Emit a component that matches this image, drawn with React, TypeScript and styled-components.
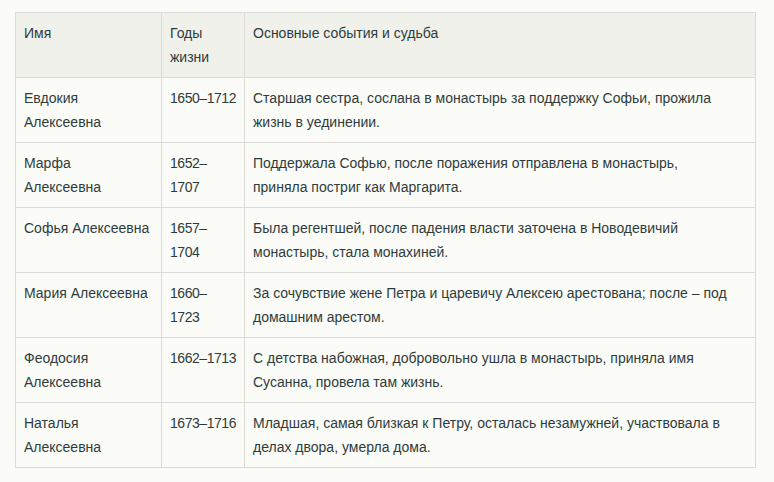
import React from "react";
import styled, { createGlobalStyle } from "styled-components";

const Global = createGlobalStyle`
  html, body { margin: 0; padding: 0; background: #fbfbf8; }
  body { font-family: "Liberation Sans", Arial, sans-serif; }
`;

const Page = styled.div`
  padding: 12px 19px 0 15px;
`;

const Table = styled.table`
  width: 740px;
  border-collapse: collapse;
  table-layout: fixed;
  font-size: 14px;
  line-height: 24px;
  color: #2e3b3c;
  border: 1px solid #dcdcd5;
`;

const Col = styled.col<{ $w: number }>`
  width: ${(p) => p.$w}px;
`;

const HeadRow = styled.tr`
  background: #f1f1ec;
`;

const Row = styled.tr`
  background: #fbfbf8;
`;

const Th = styled.th`
  text-align: left;
  font-weight: normal;
  vertical-align: top;
  padding: 8px;
  border: 1px solid #dcdcd5;
  height: 48px;
`;

const Td = styled.td<{ $tight?: boolean }>`
  vertical-align: top;
  padding: 8px;
  border: 1px solid #dcdcd5;
  height: 48px;
  white-space: ${(p) => (p.$tight ? "pre" : "pre-line")};
  letter-spacing: ${(p) => (p.$tight ? "-0.45px" : "normal")};
`;

const rows = [
  ["Евдокия\nАлексеевна", "1650–1712", "Старшая сестра, сослана в монастырь за поддержку Софьи, прожила жизнь в уединении."],
  ["Марфа\nАлексеевна", "1652–\n1707", "Поддержала Софью, после поражения отправлена в монастырь,\nприняла постриг как Маргарита."],
  ["Софья Алексеевна", "1657–\n1704", "Была регентшей, после падения власти заточена в Новодевичий монастырь, стала монахиней."],
  ["Мария Алексеевна", "1660–\n1723", "За сочувствие жене Петра и царевичу Алексею арестована; после – под домашним арестом."],
  ["Феодосия\nАлексеевна", "1662–1713", "С детства набожная, добровольно ушла в монастырь, приняла имя Сусанна, провела там жизнь."],
  ["Наталья\nАлексеевна", "1673–1716", "Младшая, самая близкая к Петру, осталась незамужней, участвовала в делах двора, умерла дома."],
];

export default function App() {
  return (
    <>
      <Global />
      <Page>
        <Table>
          <colgroup>
            <Col $w={146} />
            <Col $w={83} />
            <Col $w={511} />
          </colgroup>
          <thead>
            <HeadRow>
              <Th>Имя</Th>
              <Th>Годы жизни</Th>
              <Th>Основные события и судьба</Th>
            </HeadRow>
          </thead>
          <tbody>
            {rows.map((r) => (
              <Row key={r[0]}>
                <Td>{r[0]}</Td>
                <Td $tight>{r[1]}</Td>
                <Td>{r[2]}</Td>
              </Row>
            ))}
          </tbody>
        </Table>
      </Page>
    </>
  );
}
